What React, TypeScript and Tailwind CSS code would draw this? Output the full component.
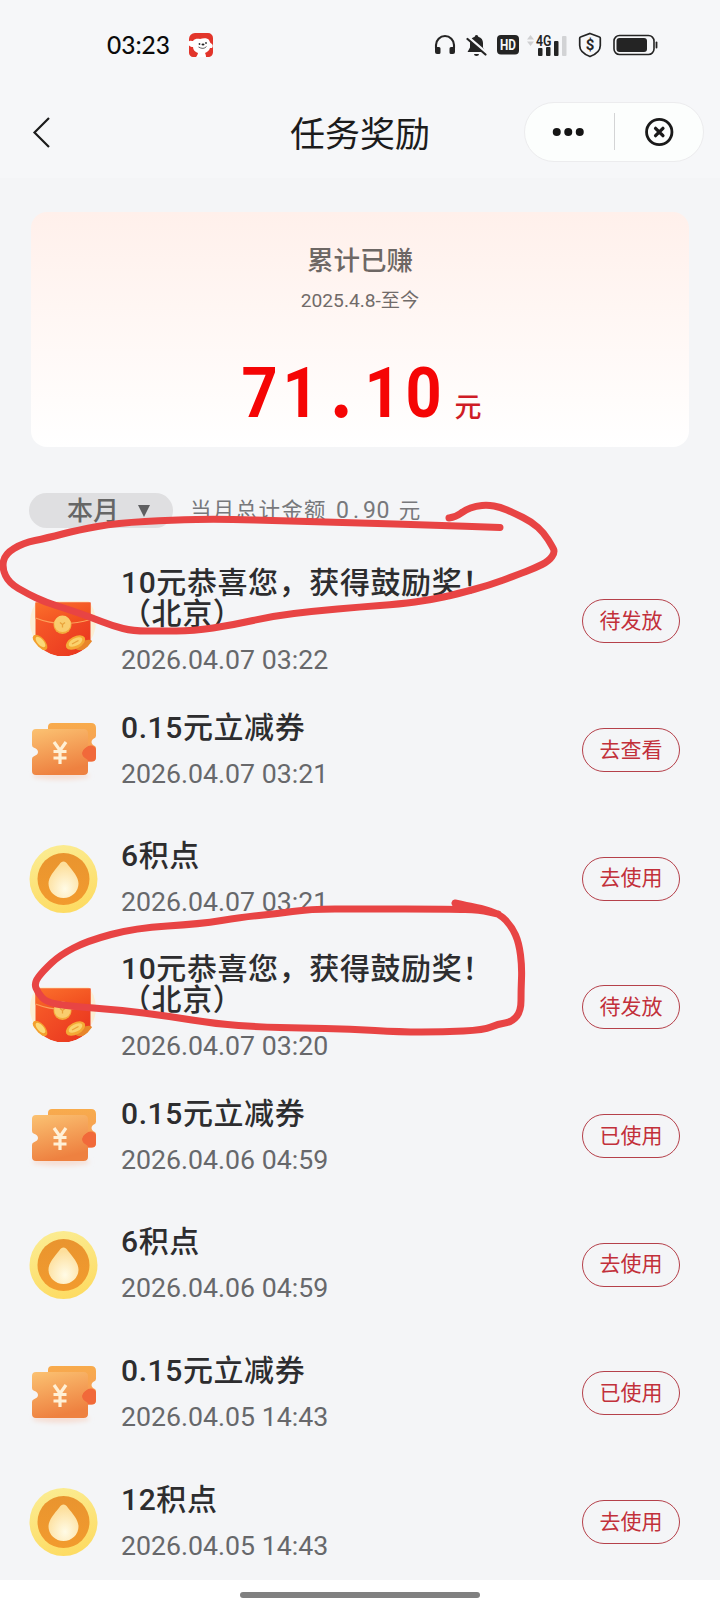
type RewardKind = "redPacket" | "coupon" | "points";

type Reward = {
  kind: RewardKind;
  title: string;
  time: string;
  action: string;
};

type Point = [number, number];

const rewards: Reward[] = [
  { kind: "redPacket", title: "10元恭喜您，获得鼓励奖！（北京）", time: "2026.04.07 03:22", action: "待发放" },
  { kind: "coupon", title: "0.15元立减券", time: "2026.04.07 03:21", action: "去查看" },
  { kind: "points", title: "6积点", time: "2026.04.07 03:21", action: "去使用" },
  { kind: "redPacket", title: "10元恭喜您，获得鼓励奖！（北京）", time: "2026.04.07 03:20", action: "待发放" },
  { kind: "coupon", title: "0.15元立减券", time: "2026.04.06 04:59", action: "已使用" },
  { kind: "points", title: "6积点", time: "2026.04.06 04:59", action: "去使用" },
  { kind: "coupon", title: "0.15元立减券", time: "2026.04.05 14:43", action: "已使用" },
  { kind: "points", title: "12积点", time: "2026.04.05 14:43", action: "去使用" },
];

// Hand-drawn marker strokes
const strokes: Point[][] = [
  [
    [449, 518], [456, 517], [465, 510], [476, 506], [488, 505], [500, 507], [514, 513], [532, 522], [544, 533],
    [552, 546], [555, 552], [549, 561], [535, 568], [517, 575], [490, 585], [457, 594], [430, 600], [400, 604],
    [360, 607], [315, 611], [273, 616], [233, 625], [193, 631], [160, 631], [133, 631], [113, 626], [90, 617],
    [67, 609], [45, 602], [28, 594], [9, 583], [2, 568], [5, 554], [23, 543], [47, 538], [78, 530], [117, 523],
    [173, 520], [220, 519], [290, 521], [360, 523], [430, 525], [500, 527.5],
  ],
  [
    [455, 903], [468, 906], [480, 908], [500, 914], [512, 927], [519, 943], [522, 967], [521, 990], [521, 1011],
    [512, 1022], [498, 1024], [484, 1030], [443, 1032], [400, 1032], [350, 1029], [300, 1028], [260, 1027],
    [217, 1024], [167, 1016], [120, 1010], [67, 1006], [46, 1002], [38, 993], [34, 983], [43, 971], [60, 955],
    [87, 941], [135, 928], [200, 924], [243, 917], [275, 914], [310, 909], [360, 909], [450, 909], [480, 910],
    [498, 914],
  ],
];

function smoothPath(pts: Point[]) {
  let d = `M${pts[0][0]} ${pts[0][1]}`;
  for (let i = 1; i < pts.length - 1; i++) {
    const mx = (pts[i][0] + pts[i + 1][0]) / 2;
    const my = (pts[i][1] + pts[i + 1][1]) / 2;
    d += ` Q${pts[i][0]} ${pts[i][1]} ${mx} ${my}`;
  }
  const last = pts[pts.length - 1];
  return `${d} L${last[0]} ${last[1]}`;
}

function MascotIcon() {
  return (
    <svg width="26" height="26" viewBox="0 0 26 26">
      <path d="M7 1h13a5 5 0 0 1 5 5v14c0 3-2 5-5 5h-2l-1-4h-6l-3 4H5c-2 0-4-2-4-4V7a6 6 0 0 1 6-6z" fill="#e2352b" />
      <path d="M0 10c2-2 4-1 5-1 2-3 6-2 7-2 3-1 8-1 9 1 1 2 1 3 3 4 1 1 1 3 0 4h-2c-1 3-3 4-5 5l1 4H9l1-4c-3-1-5-3-5-6-3 0-5-2-5-5z" fill="#fff" />
      <circle cx="11.500" cy="12" r=".9" fill="#333" />
      <circle cx="18" cy="11" r=".9" fill="#333" />
      <ellipse cx="15" cy="12.500" rx="1.500" ry="1.100" fill="#222" />
      <path d="M10.500 15q5 3 8-.5" fill="none" stroke="#555" strokeWidth=".9" />
    </svg>
  );
}

function StatusBar() {
  return (
    <div className="flex h-[90px] items-center justify-between pl-[107px] pr-[61px]">
      <div className="flex items-center gap-[18px]">
        <span className="font-['Lato'] text-[24.500px] font-medium text-[#0b0b0b]">03:23</span>
        <MascotIcon />
      </div>
      <div className="flex items-center text-[#242424]">
        <svg className="mr-[10px]" width="22" height="22" viewBox="0 0 22 22">
          <path d="M2 14v-3a9 9 0 0 1 18 0v3" fill="none" stroke="currentColor" strokeWidth="2.100" />
          <path d="M1 13h4a1.500 1.500 0 0 1 1.500 1.500v4A1.500 1.500 0 0 1 5 20H3a2 2 0 0 1-2-2zM21 13h-4a1.500 1.500 0 0 0-1.500 1.500v4A1.500 1.500 0 0 0 17 20h2a2 2 0 0 0 2-2z" fill="currentColor" />
        </svg>
        <svg className="mr-[10px]" width="21" height="23" viewBox="0 0 21 23">
          <path d="M10.500 1a1.800 1.800 0 0 1 1.800 1.700C15.500 3.500 17 6 17 9v4.500l2.500 4.500h-18L4 13.500V9c0-3 1.500-5.500 4.700-6.300A1.800 1.800 0 0 1 10.500 1zM8 20h5a2.500 2 0 0 1-5 0z" fill="currentColor" />
          <path d="M1.500 3L20 19" stroke="#f6f7f9" strokeWidth="3.600" />
          <path d="M1.500 5L19.500 20.500" stroke="currentColor" strokeWidth="2.200" strokeLinecap="round" />
        </svg>
        <svg className="mr-[7px]" width="22" height="20" viewBox="0 0 22 20">
          <rect width="22" height="19.500" rx="4" fill="currentColor" />
          <text x="3" y="15.200" fontFamily="Roboto, sans-serif" fontSize="15" fontWeight="700" textLength="16" lengthAdjust="spacingAndGlyphs" fill="#f6f7f9">
            HD
          </text>
        </svg>
        <svg className="mr-[10px]" width="42" height="24" viewBox="0 0 42 24">
          <path d="M4.500 2L8 6.500H1zM4.500 13L8 8.500H1z" fill="#cfd0d2" />
          <rect x="12" y="15" width="4.500" height="8" rx="1" fill="currentColor" />
          <rect x="20" y="14" width="4.500" height="9" rx="1" fill="currentColor" />
          <rect x="28" y="8" width="4.500" height="15" rx="1" fill="currentColor" />
          <rect x="36" y="3" width="4.500" height="20" rx="1" fill="#d2d3d5" />
          <text x="10" y="12.500" fontFamily="Roboto, sans-serif" fontSize="15" fontWeight="600" textLength="15.500" lengthAdjust="spacingAndGlyphs" fill="currentColor">
            4G
          </text>
        </svg>
        <svg className="mr-[11px]" width="24" height="26" viewBox="0 0 24 26">
          <path d="M12 1.500l9.500 3.500c.6.200.8.600.8 1.200v7.300c0 4.500-3.500 8.500-10.300 11C5.200 22 1.700 18 1.700 13.500V6.200c0-.6.200-1 .8-1.200z" fill="none" stroke="currentColor" strokeWidth="1.700" />
          <text x="12" y="18.300" textAnchor="middle" fontFamily="Roboto, sans-serif" fontSize="15" fontWeight="700" fill="currentColor">
            $
          </text>
        </svg>
        <svg width="46" height="22" viewBox="0 0 46 22">
          <rect x="1" y="1.500" width="40" height="19" rx="5.500" fill="none" stroke="currentColor" strokeWidth="1.600" />
          <rect x="3.500" y="4" width="30.500" height="14" rx="3" fill="currentColor" />
          <path d="M43.500 8.500v5" stroke="currentColor" strokeWidth="1.800" strokeLinecap="round" />
        </svg>
      </div>
    </div>
  );
}

function NavBar() {
  return (
    <div className="grid h-[88px] grid-cols-[1fr_auto_1fr] items-center px-4">
      <svg className="-mt-[3px] ml-[15px]" width="20" height="34" viewBox="0 0 20 34">
        <path d="M18 2L3.500 16.500L18 31" fill="none" stroke="#1c1c1c" strokeWidth="2.200" />
      </svg>
      <h1 className="mt-[2px] text-[35px] leading-none font-normal text-[#1c1c1c]">任务奖励</h1>
      <div className="-mt-[5px] flex h-[60px] w-[180px] items-center justify-self-end rounded-full border border-[#ececee] bg-[#fcfefd]">
        <svg className="flex-1" height="12" viewBox="0 0 40 12">
          <circle cx="7.500" cy="6" r="4" fill="#151515" />
          <circle cx="19" cy="6" r="4" fill="#151515" />
          <circle cx="30.500" cy="6" r="4" fill="#151515" />
        </svg>
        <div className="h-[37px] w-px bg-[#d3d4d5]" />
        <svg className="flex-1" height="30" viewBox="0 0 30 30">
          <circle cx="15" cy="15" r="12.700" fill="none" stroke="#1a1a1a" strokeWidth="2.800" />
          <path d="M11.300 11.300l7.400 7.400M18.700 11.300l-7.400 7.400" stroke="#1a1a1a" strokeWidth="3.300" strokeLinecap="round" />
        </svg>
      </div>
    </div>
  );
}

function RedPacketIcon() {
  return (
    <svg width="70" height="70" viewBox="0 0 70 70">
      <defs>
        <linearGradient id="packet" x1="0" y1="0" x2="1" y2="1">
          <stop offset="0" stopColor="#f9622a" />
          <stop offset="1" stopColor="#e8321e" />
        </linearGradient>
        <linearGradient id="flap" x1="0" y1="0" x2="1" y2="1">
          <stop offset="0" stopColor="#fb6f2c" />
          <stop offset="1" stopColor="#ef471d" />
        </linearGradient>
        <clipPath id="packetClip">
          <path d="M0 15h70v21a34.500 34 0 0 1-70 0z" />
        </clipPath>
      </defs>
      <g clipPath="url(#packetClip)">
        <circle cx="35" cy="36" r="33" fill="#fbeed4" />
        <path d="M7.500 16.500h55v39q-10 15-27 15t-28-15z" fill="url(#packet)" />
        <path d="M7.500 16.500h55v17q-14 4-27 4t-28-5z" fill="url(#flap)" />
        <path d="M7.500 32q14 5.500 28 5.500t27-4" fill="none" stroke="#fba05c" strokeWidth="1.200" />
        <circle cx="34.500" cy="39" r="9" fill="#f3ab3c" />
        <circle cx="34.500" cy="37.800" r="8.300" fill="#f9cd6e" />
        <path d="M32 36.500l2.500 2 2.500-2M34.500 38.500v3" fill="none" stroke="#e9a23a" strokeWidth="1.300" />
        <ellipse cx="12" cy="56.500" rx="9.500" ry="5" transform="rotate(48 12 56.500)" fill="#f3a02e" />
        <ellipse cx="12.500" cy="56" rx="6.500" ry="3" transform="rotate(48 12.500 56)" fill="#fbd978" />
        <ellipse cx="56" cy="59" rx="9" ry="4" transform="rotate(-25 56 59)" fill="#e8862a" />
        <ellipse cx="47.500" cy="56.500" rx="10.500" ry="6" transform="rotate(-28 47.500 56.500)" fill="#f4aa36" />
        <ellipse cx="47.500" cy="56" rx="7.500" ry="3.800" transform="rotate(-28 47.500 56)" fill="#fad26c" />
        <path d="M44 58l6.500-3.500" stroke="#e9a23a" strokeWidth="1.300" />
      </g>
    </svg>
  );
}

function CouponIcon() {
  return (
    <svg width="70" height="70" viewBox="0 0 70 70">
      <defs>
        <linearGradient id="ticketFront" x1="0" y1="0" x2=".3" y2="1">
          <stop offset="0" stopColor="#fbc272" />
          <stop offset="1" stopColor="#ee8140" />
        </linearGradient>
        <linearGradient id="ticketBack" x1="0" y1="0" x2="0" y2="1">
          <stop offset="0" stopColor="#f8ab4c" />
          <stop offset="1" stopColor="#f59a5a" />
        </linearGradient>
        <filter id="soft" x="-20%" y="-50%" width="140%" height="200%">
          <feGaussianBlur stdDeviation="2" />
        </filter>
      </defs>
      <ellipse cx="33" cy="61" rx="29" ry="4" fill="#f5dfd6" filter="url(#soft)" />
      <path d="M24 8h39q5 0 5 5v8q0 2-3 3-3 3 0 6 3 1 3 3v9q0 4.500-4.500 4.500H20V12q0-4 4-4z" fill="url(#ticketBack)" />
      <path d="M60 31q4-1 6 .5 2 1 2 3V42q0 4.500-4.500 4.500H60q-6-2.500-6-7.500t6-8z" fill="#f1693a" />
      <path d="M8 14h47.500q4.500 0 4.500 4.500V30q0 1.500-2 2.300-4 2-4 5.700t4 5.700q2 .8 2 2.300v10q0 4-4.500 4H8q-4 0-4-4V44q0-2 2-2.800 4-1.500 4-4.200t-4-4.200Q4 32 4 30V18q0-4 4-4z" fill="url(#ticketFront)" />
      <path d="M26 27l6 8.500 6-8.500M25.500 36.500h13M25.500 43h13M32 35.500V49" fill="none" stroke="#fff0d6" strokeWidth="3.200" />
    </svg>
  );
}

function PointsIcon() {
  return (
    <svg width="70" height="70" viewBox="0 0 70 70">
      <defs>
        <linearGradient id="coinRim" x1=".3" y1="0" x2=".6" y2="1">
          <stop offset="0" stopColor="#fbec92" />
          <stop offset="1" stopColor="#fddb62" />
        </linearGradient>
        <linearGradient id="coinFace" x1="0" y1="0" x2="0" y2="1">
          <stop offset="0" stopColor="#e9942f" />
          <stop offset="1" stopColor="#f29b2e" />
        </linearGradient>
        <radialGradient id="drop" cx=".55" cy=".75" r=".65">
          <stop offset="0" stopColor="#fffbe6" />
          <stop offset="1" stopColor="#fddf9c" />
        </radialGradient>
      </defs>
      <circle cx="35.500" cy="35" r="34" fill="url(#coinRim)" />
      <circle cx="35.500" cy="35" r="26" fill="url(#coinFace)" />
      <path d="M35.500 17.500c1.600 0 2.800 1 4 2.700C45 27 50.500 33 50.500 39.500a15 14.500 0 0 1-30 0c0-6.500 5.500-12.500 11-19.300 1.200-1.700 2.400-2.700 4-2.700z" fill="url(#drop)" />
    </svg>
  );
}

function RewardIcon({ kind }: { kind: RewardKind }) {
  if (kind === "redPacket") return <RedPacketIcon />;
  if (kind === "coupon") return <CouponIcon />;
  return <PointsIcon />;
}

function RewardRow({ reward }: { reward: Reward }) {
  return (
    <li className="flex h-[128.7px] items-center pl-7 pr-10">
      <RewardIcon kind={reward.kind} />
      <div className="ml-[23px] flex-1">
        <p className="w-[380px] text-[30px] leading-[31px] font-medium tracking-[0.6px] text-[#2d2d2f]">
          {reward.title}
        </p>
        <p className="mt-[15px] -mb-[2px] text-[26.700px] leading-[33px] text-[#67686b]">{reward.time}</p>
      </div>
      <button className="h-[44px] w-[98px] rounded-full border border-[#b5404a] text-[21px] leading-none text-[#c2303a]">
        {reward.action}
      </button>
    </li>
  );
}

export default function App() {
  return (
    <div className="relative flex h-[1612px] w-[720px] flex-col overflow-hidden bg-[#f4f5f7] font-['Roboto','Noto_Sans_CJK_SC',sans-serif]">
      <header className="bg-[#f6f7f9]">
        <StatusBar />
        <NavBar />
      </header>

      <main className="min-h-0 flex-1 overflow-hidden pt-[34px]">
        <section className="mx-[31px] flex h-[235px] flex-col items-center rounded-[16px] bg-gradient-to-b from-[#fff0eb] to-white pt-[33px]">
          <h2 className="text-[26.500px] leading-[32px] font-medium text-[#6d6764]">累计已赚</h2>
          <p className="mt-[12px] text-[19.200px] leading-[24px] text-[#716b69]">2025.4.8-至今</p>
          <div className="mt-[39px] flex items-baseline">
            <p className="flex items-baseline text-[70px] leading-[82px] font-bold text-[#f50505]">
              {"71.10".split("").map((ch, i) =>
                ch === "." ? (
                  <span key={i} className="w-[41px] text-center font-['Noto_Sans_CJK_SC'] leading-[0]">
                    {ch}
                  </span>
                ) : (
                  <span key={i} className="w-[41px] scale-x-90 text-center">
                    {ch}
                  </span>
                )
              )}
            </p>
            <span className="ml-[11px] text-[27px] leading-none font-medium text-[#cf1c26]">元</span>
          </div>
        </section>

        <div className="mt-[46px] flex h-[35px] items-center pl-[29px]">
          <button className="flex h-[35px] w-[144px] items-center rounded-full bg-[#dfdfe1] pl-[38px] text-[26px] leading-none font-medium text-[#666]">
            本月
            <svg className="ml-[18px]" width="14" height="14" viewBox="0 0 14 14">
              <path d="M1 1h12L7 13z" fill="#5f5f61" />
            </svg>
          </button>
          <p className="ml-[17px] flex items-baseline text-[21.500px] leading-none tracking-[1.300px] text-[#77787b]">
            当月总计金额
            <span className="mx-[9px] text-[23px] leading-none tracking-normal">
              {"0.90".split("").map((ch, i) => (
                <span key={i} className="inline-block w-[13.5px] text-center">
                  {ch}
                </span>
              ))}
            </span>
            元
          </p>
        </div>

        <ul className="mt-[29px]">
          {rewards.map((r, i) => (
            <RewardRow key={i} reward={r} />
          ))}
        </ul>
      </main>

      <footer className="flex h-8 justify-center bg-white pt-3">
        <div className="h-[6px] w-[240px] rounded-full bg-[#808080]" />
      </footer>

      <svg className="pointer-events-none absolute inset-0" width="720" height="1612" viewBox="0 0 720 1612">
        {strokes.map((pts, i) => (
          <path
            key={i}
            d={smoothPath(pts)}
            fill="none"
            stroke="#e84444"
            strokeWidth="7"
            strokeLinecap="round"
            strokeLinejoin="round"
          />
        ))}
      </svg>
    </div>
  );
}
